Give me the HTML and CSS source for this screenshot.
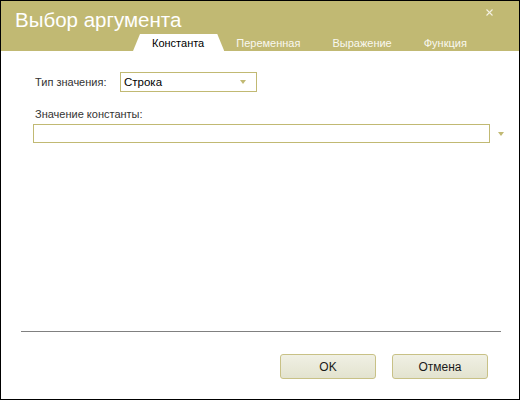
FILE: index.html
```html
<!DOCTYPE html>
<html lang="ru">
<head>
<meta charset="utf-8">
<title>Выбор аргумента</title>
<link rel="stylesheet" href="styles.css">
</head>
<body>
<div class="window">
  <header class="header">
    <div class="title-row">
      <h1 class="title">Выбор аргумента</h1>
      <span class="close">
        <svg width="7" height="7" viewBox="0 0 7 7"><path d="M0.5 0.5L6.5 6.5M6.5 0.5L0.5 6.5" stroke="#f4f1e2" stroke-width="1.1" fill="none"/></svg>
      </span>
    </div>
    <nav class="tabs">
      <span class="tab active">Константа</span>
      <span class="tab">Переменная</span>
      <span class="tab">Выражение</span>
      <span class="tab">Функция</span>
    </nav>
  </header>
  <main class="content">
    <div class="row-type">
      <span class="label">Тип значения:</span>
      <div class="select">
        <span class="select-text">Строка</span>
        <span class="arrow"></span>
      </div>
    </div>
    <div class="label label-value">Значение константы:</div>
    <div class="row-value">
      <div class="input"></div>
      <span class="arrow arrow-out"></span>
    </div>
  </main>
  <footer class="footer">
    <div class="separator"></div>
    <div class="buttons">
      <button class="btn">OK</button>
      <button class="btn">Отмена</button>
    </div>
  </footer>
</div>
</body>
</html>
```
FILE: styles.css
```css
* { box-sizing: border-box; }
html, body { margin: 0; padding: 0; }
body {
  width: 520px;
  height: 400px;
  font-family: "Liberation Sans", Arial, sans-serif;
  font-size: 11px;
  color: #333333;
  background: #ffffff;
}
.window {
  width: 520px;
  height: 400px;
  border: 1px solid #000000;
  display: flex;
  flex-direction: column;
  background: #ffffff;
}
.header {
  height: 50px;
  background: #c1b973;
  display: flex;
  flex-direction: column;
  justify-content: space-between;
}
.title-row {
  display: flex;
  justify-content: space-between;
  align-items: flex-start;
}
.title {
  margin: 7px 0 0 14px;
  font-size: 20.5px;
  font-weight: normal;
  line-height: 24px;
  color: #ffffff;
}
.close {
  margin: 8px 26px 0 0;
  display: flex;
}
.tabs {
  display: flex;
  align-items: flex-end;
  padding-left: 132px;
  height: 17px;
}
.tab {
  height: 17px;
  line-height: 18px;
  padding: 0 16px;
  color: #f9f8f0;
  white-space: nowrap;
}
.tab.active {
  background: #ffffff;
  color: #000000;
  padding: 0 20px 0 19px;
  margin-right: -4px;
  clip-path: polygon(7px 0, calc(100% - 7px) 0, 100% 100%, 0 100%);
}
.content {
  flex: 1;
  padding: 21px 0 0 32px;
}
.row-type {
  display: flex;
  align-items: center;
}
.label {
  color: #333333;
  white-space: nowrap;
}
.row-type .label {
  width: 87px;
  padding-left: 2px;
}
.select {
  width: 137px;
  height: 20px;
  border: 1px solid #c1b973;
  display: flex;
  align-items: center;
  justify-content: space-between;
  padding: 0 10px 0 3px;
}
.select-text { color: #000000; font-size: 11.5px; }
.arrow {
  width: 0;
  height: 0;
  border-left: 3px solid transparent;
  border-right: 3px solid transparent;
  border-top: 4px solid #c1b973;
}
.label-value {
  margin-top: 15px;
  padding-left: 2px;
  line-height: 14px;
}
.row-value {
  margin-top: 3px;
  display: flex;
  align-items: center;
}
.input {
  width: 457px;
  height: 19px;
  border: 1px solid #c1b973;
}
.arrow-out {
  margin-left: 8px;
}
.footer {
  height: 68px;
  display: flex;
  flex-direction: column;
}
.separator {
  margin: 0 18px 0 20px;
  height: 1px;
  background: #808080;
}
.buttons {
  display: flex;
  justify-content: flex-end;
  gap: 16px;
  padding: 22px 31px 0 0;
}
.btn {
  width: 96px;
  height: 25px;
  border: 1px solid #c8c186;
  border-radius: 3px;
  background: linear-gradient(#f0f0e4, #e3e3cf);
  font-family: "Liberation Sans", Arial, sans-serif;
  font-size: 12px;
  color: #1a1a1a;
  padding: 0;
}
```
